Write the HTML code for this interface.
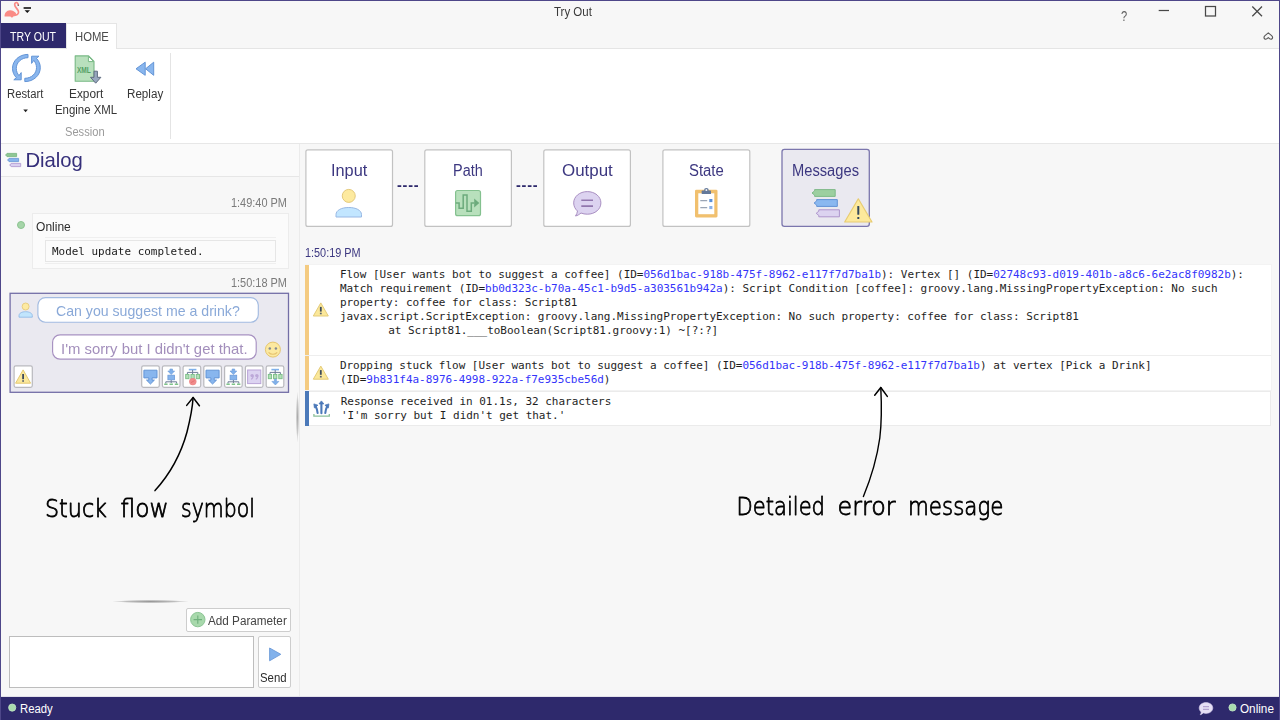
<!DOCTYPE html>
<html lang="en">
<head>
<meta charset="utf-8">
<title>Try Out</title>
<style>
*{box-sizing:border-box;margin:0;padding:0}
html,body{width:1280px;height:720px;overflow:hidden;background:#f7f7f7}
body{position:relative;font-family:"Liberation Sans",sans-serif;font-size:12px;color:#222}
.abs{position:absolute}
.t{position:absolute;white-space:pre;line-height:1;transform-origin:0 0}
svg{position:absolute;overflow:visible}
#frame{left:0;top:0;width:1280px;height:720px;border:1px solid #4e4789;border-bottom:none;pointer-events:none}
#tab-try{left:1px;top:23px;width:65px;height:25px;background:#2e296c}
#tab-home{left:66px;top:23px;width:51px;height:26px;background:#fff;border:1px solid #e5e5e5;border-bottom:none}
#ribbon{left:1px;top:48px;width:1278px;height:96px;background:#fff;border-top:1px solid #e5e5e5;border-bottom:1px solid #e7e7e7}
#ribsep{left:170px;top:53px;width:1px;height:86px;background:#e4e4e4}
#lhead{left:1px;top:144px;width:298px;height:33px;background:#fafafa;border-bottom:1px solid #e6e6e6}
#lsplit{left:299px;top:144px;width:1px;height:553px;background:#ebebeb}
#status{left:0;top:697px;width:1280px;height:23px;background:#2e296c}
.box{position:absolute;background:#fff;border:1px solid #c9c9c9;border-radius:2px}
.pb{position:absolute;top:149px;width:88px;height:78px;background:#fff;border:1px solid #c6c6c6;border-radius:2px;box-shadow:0 1px 0 rgba(0,0,0,.05)}
.msg{position:absolute;left:305px;width:967px;background:#fff;border:1px solid #f0f0f0}
.bar{position:absolute;left:305px;width:4px}
.ml{position:absolute;left:339.9px;white-space:pre;line-height:14px;font-family:"DejaVu Sans Mono","Liberation Mono",monospace;font-size:11px;letter-spacing:-0.024px;color:#1e1e1e}
.ml b{font-weight:normal;color:#3434fa}
</style>
</head>
<body>

<!-- chrome -->
<div id="ribbon" class="abs"></div>
<div id="tab-try" class="abs"></div>
<div id="tab-home" class="abs"></div>
<svg width="1280" height="50" viewBox="0 0 1280 50" style="left:0;top:0">
<!-- flamingo -->
<g>
<path d="M4.6 16.4 C4.3 13.2 6.6 10.3 10 10.2 C12.6 10.1 14 11.4 15.4 12.6 C16.6 13.6 16.4 15.6 13.8 16 L12.9 17.3 L11.4 17.6 L10.4 16.5 Z" fill="#fa8b86"/>
<path d="M13.2 15.2 C16.8 15.8 19.3 13.8 18.4 11.2 C17.6 8.8 14.8 7.2 14.7 4.7 C14.6 3 16 2.1 17 2.7 C17.7 3.1 18.1 3.9 18.3 4.7" fill="none" stroke="#fa8b86" stroke-width="1.7" stroke-linecap="round"/>
<circle cx="18.3" cy="5.3" r="0.8" fill="#6b5f66"/>
</g>
<!-- quick access dropdown -->
<rect x="23.6" y="7.2" width="7.4" height="1.6" fill="#111"/>
<path d="M24.6 10.2 L30 10.2 L27.3 13.1 Z" fill="#111"/>
<!-- window controls -->
<g fill="none" stroke="#484848" stroke-width="1.25">
<path d="M1158.7 10.5 H1169"/>
<rect x="1205.5" y="6.5" width="10" height="9.5"/>
<path d="M1252.3 6.5 L1262 16.2 M1262 6.5 L1252.3 16.2"/>
</g>
<path d="M1264.6 38.8 C1263.6 37.6 1264 36.5 1265 35.6 L1268.3 32.8 L1271.6 35.6 C1272.6 36.5 1273 37.6 1272 38.8 C1271 39.6 1269.6 39 1268.3 37.6 C1267 39 1265.6 39.6 1264.6 38.8 Z" fill="none" stroke="#5a5a5a" stroke-width="1.1" stroke-linejoin="round"/>
</svg>

<!-- ribbon -->
<div id="ribsep" class="abs"></div>
<svg width="200" height="100" viewBox="0 48 200 100" style="left:0;top:48px">
<!-- restart -->
<g fill="#89b6ee" stroke="#6394d6" stroke-width="1" stroke-linejoin="round">
<path id="rsarc" d="M28 54.4 L28 57.7 C21.3 57.7 16.3 62.4 16.3 68.4 C16.3 71.3 17.4 73.7 19 75.6 L21.2 72.6 L21.2 79.8 L13.8 79.8 L16.4 77.7 C14 75.4 12.5 72.1 12.5 68.3 C12.5 60.6 19.2 54.4 28 54.4 Z"/>
<path d="M28 54.4 L28 57.7 C21.3 57.7 16.3 62.4 16.3 68.4 C16.3 71.3 17.4 73.7 19 75.6 L21.2 72.6 L21.2 79.8 L13.8 79.8 L16.4 77.7 C14 75.4 12.5 72.1 12.5 68.3 C12.5 60.6 19.2 54.4 28 54.4 Z" transform="rotate(180 26.4 68)"/>
</g>
<!-- export xml -->
<path d="M75.2 55.9 L88.6 55.9 L94 61.4 L94 81.2 L75.2 81.2 Z" fill="#b9e0bd" stroke="#78b985" stroke-width="1.1" stroke-linejoin="round"/>
<path d="M88.4 56.4 L88.4 61.6 L93.6 61.6 Z" fill="#fff" stroke="#78b985" stroke-width="1" stroke-linejoin="round"/>
<text x="76.9" y="72.6" font-family="'Liberation Sans',sans-serif" font-weight="bold" font-size="8.6" fill="#55a065" textLength="13.9" lengthAdjust="spacingAndGlyphs">XML</text>
<path d="M94 71.2 L97.4 71.2 L97.4 77.3 L100.9 77.3 L95.7 83.2 L90.5 77.3 L94 77.3 Z" fill="#98a8bf" stroke="#5f6c80" stroke-width="1" stroke-linejoin="round"/>
<!-- replay -->
<g fill="#89b6ee" stroke="#6394d6" stroke-width="1" stroke-linejoin="round">
<path d="M136 68.8 L145.2 62.2 L145.2 75.3 Z"/>
<path d="M145.6 68.8 L153.7 62.2 L153.7 75.3 Z"/>
</g>
<!-- restart dropdown arrow -->
<path d="M23.3 109.6 L27.9 109.6 L25.6 112.2 Z" fill="#222"/>
</svg>

<!-- left -->
<div id="lhead" class="abs"></div>
<div id="lsplit" class="abs"></div>
<!-- online notice -->
<div class="abs" style="left:32px;top:213px;width:257px;height:56px;background:#fbfbfb;border:1px solid #ececec"></div>
<div class="abs" style="left:45px;top:237px;width:231px;height:1px;background:#efefef"></div>
<div class="abs" style="left:45px;top:263px;width:231px;height:1px;background:#efefef"></div>
<div class="abs" style="left:45px;top:240px;width:231px;height:22px;background:#fbfbfb;border:1px solid #e6e6e6"></div>
<!-- splitter grips -->
<div class="abs" style="left:113px;top:600px;width:75px;height:3px;background:radial-gradient(ellipse at center,rgba(120,120,120,.75) 0%,rgba(120,120,120,.45) 45%,rgba(120,120,120,0) 72%)"></div>
<div class="abs" style="left:296px;top:392px;width:3px;height:50px;background:radial-gradient(ellipse at center,rgba(120,120,120,.6) 0%,rgba(120,120,120,.35) 45%,rgba(120,120,120,0) 72%)"></div>
<!-- input -->
<div class="box" style="left:186px;top:608px;width:105px;height:24px;border-color:#cdcdcd"></div>
<div class="abs" style="left:9px;top:636px;width:245px;height:52px;background:#fff;border:1px solid #bdbdbd"></div>
<div class="box" style="left:258px;top:636px;width:33px;height:52px;border-color:#cdcdcd"></div>
<svg width="300" height="560" viewBox="0 143 300 560" style="left:0;top:143px">
<!-- dialog header icon -->
<g stroke-width="0.9" stroke-linejoin="round">
<path d="M5.5 155 L7 153.9 L7 153.4 L16.6 153.4 L16.6 156.6 L7 156.6 L7 156.1 Z" fill="#8fc794" stroke="#7cb885"/>
<path d="M7.5 160 L9 158.9 L9 158.4 L18.6 158.4 L18.6 161.6 L9 161.6 L9 161.1 Z" fill="#86b4ec" stroke="#6c9ad8"/>
<path d="M9.6 165 L11.1 163.9 L11.1 163.4 L20.7 163.4 L20.7 166.6 L11.1 166.6 L11.1 166.1 Z" fill="#d9cff0" stroke="#b39cd2"/>
</g>
<!-- online dot -->
<circle cx="21" cy="225" r="3.5" fill="#a6d5a9" stroke="#8cc491" stroke-width="1"/>
<!-- dialog turn box -->
<rect x="10.1" y="293.3" width="278.4" height="99" fill="#eae9f0" stroke="#736ea6" stroke-width="1.3"/>
<rect x="37.9" y="297.6" width="220.4" height="24.6" rx="7.5" fill="#fff" stroke="#a3bbe1" stroke-width="1.15"/>
<rect x="52.6" y="334.8" width="203.6" height="24.4" rx="7.5" fill="#fff" stroke="#a791c1" stroke-width="1.15"/>
<!-- user icon -->
<circle cx="25.6" cy="306.5" r="3.5" fill="#fdeaa2" stroke="#e6cb7c" stroke-width="0.9"/>
<path d="M19 317.2 L19 315.6 C19 313.2 21.8 311.7 25.6 311.7 C29.4 311.7 32.3 313.2 32.3 315.6 L32.3 317.2 Z" fill="#c1e5fd" stroke="#93bbe6" stroke-width="0.9" stroke-linejoin="round"/>
<!-- smiley -->
<circle cx="272.9" cy="349.6" r="7.5" fill="#fce9a0" stroke="#e5c570" stroke-width="1"/>
<circle cx="269.8" cy="348.5" r="1.25" fill="#848a92"/>
<circle cx="275.9" cy="348.5" r="1.25" fill="#848a92"/>
<path d="M268.9 352.6 C270.6 354.8 275.2 354.8 276.9 352.6" fill="none" stroke="#e6c36f" stroke-width="1.2" stroke-linecap="round"/>
<!-- small buttons -->
<g fill="#fff" stroke="#b9b9be" stroke-width="1.2">
<rect x="14.1" y="365.8" width="18.2" height="21.5" rx="1.8"/>
<rect x="141.7" y="365.8" width="17.6" height="21.5" rx="1.8"/>
<rect x="162.4" y="365.8" width="17.6" height="21.5" rx="1.8"/>
<rect x="183.1" y="365.8" width="17.6" height="21.5" rx="1.8"/>
<rect x="203.8" y="365.8" width="17.6" height="21.5" rx="1.8"/>
<rect x="224.6" y="365.8" width="17.6" height="21.5" rx="1.8"/>
<rect x="245.4" y="365.8" width="17.6" height="21.5" rx="1.8"/>
<rect x="266.2" y="365.8" width="17.6" height="21.5" rx="1.8"/>
</g>
<!-- warning (stuck flow) -->
<path d="M23.1 369.9 L30.6 383.2 L15.6 383.2 Z" fill="#fbe89c" stroke="#e4c972" stroke-width="1" stroke-linejoin="round"/>
<rect x="22.2" y="374" width="1.8" height="5.2" fill="#3c4a5c"/>
<rect x="22.2" y="380.2" width="1.8" height="1.6" fill="#5a6470"/>
<!-- flow icons -->
<defs>
<g id="i-in"><path d="M0.5 0.6 L13.6 0.6 L13.6 8.3 L8.7 8.3 L8.7 10.5 L11 10.5 L7.05 14.4 L3.1 10.5 L5.4 10.5 L5.4 8.3 L0.5 8.3 Z" fill="#88b6ee" stroke="#6394d6" stroke-width="1" stroke-linejoin="round"/></g>
<g id="i-tree"><path d="M5.7 0 L8.3 0 L8.3 2 L10.4 2 L7 5.6 L3.6 2 L5.7 2 Z" fill="#7fb0ea" stroke="#6c9ad8" stroke-width="0.6"/><rect x="3.7" y="6.2" width="6.6" height="4.6" fill="#86b4ec" stroke="#6c9ad8" stroke-width="0.8"/><path d="M7 11 V14 M1.6 14.6 V12.8 H12.4 V14.6" fill="none" stroke="#6f7e98" stroke-width="1"/><path d="M0 15.2 H3.4 M5.3 15.2 H8.7 M10.6 15.2 H14" fill="none" stroke="#7fc48a" stroke-width="1.5"/></g>
<g id="i-fan"><path d="M3.2 0.6 H10.8" stroke="#7fb0ea" stroke-width="1.6" fill="none"/><path d="M7 1 V5 M1.8 5.4 V3.4 H12.2 V5.4" fill="none" stroke="#6f7e98" stroke-width="1"/><g fill="#b4dfb8" stroke="#79bd85" stroke-width="0.9"><rect x="0.1" y="5.4" width="3.3" height="4.3"/><rect x="5.35" y="5.4" width="3.3" height="4.3"/><rect x="10.6" y="5.4" width="3.3" height="4.3"/></g></g>
</defs>
<use href="#i-in" x="143.4" y="369.6"/>
<use href="#i-tree" x="164.2" y="369"/>
<use href="#i-fan" x="185.6" y="369"/>
<circle cx="192.8" cy="381.6" r="3.7" fill="#f08b8b"/>
<path d="M191 382.6 L194.6 380.6" stroke="#e06c6c" stroke-width="0.8"/>
<use href="#i-in" x="205.5" y="369.6"/>
<use href="#i-tree" x="226.4" y="369"/>
<rect x="247.6" y="370" width="13.2" height="13.6" fill="#dcd3f1" stroke="#baa4d8" stroke-width="1"/>
<g fill="#bca8d8"><circle cx="252.1" cy="375.6" r="1.7"/><circle cx="256.8" cy="375.6" r="1.7"/><path d="M253.8 375.6 C253.8 378 252.8 379.3 251.2 379.7 L250.9 378.8 C251.8 378.4 252.3 377.6 252.3 376.6 Z"/><path d="M258.5 375.6 C258.5 378 257.5 379.3 255.9 379.7 L255.6 378.8 C256.5 378.4 257 377.6 257 376.6 Z"/></g>
<use href="#i-fan" x="268.2" y="369"/>
<path d="M274.4 379.2 L276.4 379.2 L276.4 381.4 L278.9 381.4 L275.4 385 L271.9 381.4 L274.4 381.4 Z" fill="#7fb0ea" stroke="#6c9ad8" stroke-width="0.6" stroke-linejoin="round"/>
<!-- add parameter icon -->
<circle cx="197.8" cy="619.6" r="7.2" fill="#a8d9ac" stroke="#8cc595" stroke-width="1"/>
<path d="M193.6 619.6 H202 M197.8 615.4 V623.8" stroke="#6fb07c" stroke-width="1.1" fill="none"/>
<!-- send icon -->
<path d="M269.6 648 L280.8 654.3 L269.6 660.8 Z" fill="#82b2ec" stroke="#6c9ad8" stroke-width="0.9" stroke-linejoin="round"/>
</svg>

<!-- right -->
<!-- messages -->
<div class="abs" style="left:305px;top:264px;width:967px;height:127px;background:#f3f3f3"></div>
<div class="abs" style="left:305px;top:265px;width:966px;height:90px;background:#fff"></div>
<div class="abs" style="left:305px;top:355px;width:966px;height:1px;background:#eeeeee"></div>
<div class="abs" style="left:305px;top:356px;width:966px;height:34px;background:#fff"></div>
<div class="abs" style="left:305px;top:391px;width:966px;height:35px;background:#fff;border:1px solid #ebebeb"></div>
<div class="bar" style="top:265px;height:90px;background:#f4cb81"></div>
<div class="bar" style="top:356px;height:34px;background:#f4cb81"></div>
<div class="bar" style="top:391px;height:35px;background:#4b79b9"></div>
<div class="ml" style="top:267.5px">Flow [User wants bot to suggest a coffee] (ID=<b>056d1bac-918b-475f-8962-e117f7d7ba1b</b>): Vertex [] (ID=<b>02748c93-d019-401b-a8c6-6e2ac8f0982b</b>):</div>
<div class="ml" style="top:281.5px">Match requirement (ID=<b>bb0d323c-b70a-45c1-b9d5-a303561b942a</b>): Script Condition [coffee]: groovy.lang.MissingPropertyException: No such</div>
<div class="ml" style="top:295.5px">property: coffee for class: Script81</div>
<div class="ml" style="top:309.5px">javax.script.ScriptException: groovy.lang.MissingPropertyException: No such property: coffee for class: Script81</div>
<div class="ml" style="top:323.5px;left:388.2px">at Script81.___toBoolean(Script81.groovy:1) ~[?:?]</div>
<div class="ml" style="top:359px">Dropping stuck flow [User wants bot to suggest a coffee] (ID=<b>056d1bac-918b-475f-8962-e117f7d7ba1b</b>) at vertex [Pick a Drink]</div>
<div class="ml" style="top:372.5px">(ID=<b>9b831f4a-8976-4998-922a-f7e935cbe56d</b>)</div>
<div class="ml" style="top:395.3px;left:340.7px">Response received in 01.1s, 32 characters</div>
<div class="ml" style="top:408.8px;left:340.9px">'I'm sorry but I didn't get that.'</div>
<svg width="980" height="300" viewBox="300 143 980 300" style="left:300px;top:143px">
<g fill="#fff" stroke="#c2c2c2" stroke-width="1.2"><rect x="305.9" y="149.8" width="86.6" height="76.6" rx="2"/><rect x="424.8" y="149.8" width="86.6" height="76.6" rx="2"/><rect x="543.8" y="149.8" width="86.6" height="76.6" rx="2"/><rect x="662.9" y="149.8" width="86.9" height="76.6" rx="2"/></g>
<!-- messages button (selected) -->
<rect x="782.0" y="149.4" width="87.3" height="77" rx="2.4" fill="#eae9f0" stroke="#7b76ad" stroke-width="1.3"/>
<!-- input icon -->
<circle cx="348.75" cy="195.9" r="6.5" fill="#fdea9f" stroke="#e4c97a" stroke-width="1"/>
<path d="M336 217 L336 214.6 C336 210.2 341.6 207.5 348.75 207.5 C355.9 207.5 361.5 210.2 361.5 214.6 L361.5 217 Z" fill="#c2e6ff" stroke="#98b8e4" stroke-width="1" stroke-linejoin="round"/>
<!-- path icon -->
<rect x="455.6" y="190.5" width="24.9" height="25.2" rx="2" fill="#b8e0bc" stroke="#84c18f" stroke-width="1.2"/>
<path d="M455.8 203.1 H459.1 V208.2 H463.2 V195 H467 V211.2 H471.3 V203.1 H474.4" fill="none" stroke="#6cab7c" stroke-width="1.5"/>
<path d="M474.2 198.6 L479.3 203.1 L474.2 207.4 Z" fill="#6cab7c"/>
<!-- output icon -->
<path d="M587.3 191.6 C595 191.6 600.9 196.6 600.9 202.9 C600.9 209.2 595 214.2 587.3 214.2 C585 214.2 582.9 213.8 581 213 C579.4 214.4 577.6 215.5 575.5 216 C576.6 214.4 577.3 212.8 577.5 211 C575.1 209 573.7 206.1 573.7 202.9 C573.7 196.6 579.6 191.6 587.3 191.6 Z" fill="#dcd3f0" stroke="#a98fc2" stroke-width="1" stroke-linejoin="round"/>
<path d="M581.3 200.2 H593 M581.3 206.1 H593" stroke="#9177ad" stroke-width="1.6" fill="none"/>
<!-- state icon -->
<rect x="695" y="189.8" width="22.5" height="27.6" rx="1.3" fill="#f1c06e"/>
<rect x="698.3" y="193.3" width="16" height="20.9" fill="#fff"/>
<circle cx="706.4" cy="190.3" r="1.7" fill="#fff" stroke="#64799a" stroke-width="1.3"/>
<rect x="701.7" y="190.6" width="9.3" height="3.4" rx="0.6" fill="#64799a"/>
<circle cx="706.4" cy="190.2" r="0.7" fill="#f4f4f8"/>
<path d="M700.3 200.6 H707.2 M700.3 207.6 H707.2" stroke="#9aa5b5" stroke-width="1.3" fill="none"/>
<rect x="709.3" y="199" width="3.1" height="3.1" fill="#5a8fd6"/>
<rect x="709.3" y="206" width="3.1" height="3.1" fill="#8ab0e6"/>
<!-- messages icon -->
<g stroke-width="1" stroke-linejoin="round">
<path d="M812 193 L814.6 190.9 L814.6 189.6 L835.2 189.6 L835.2 196.4 L814.6 196.4 L814.6 195.1 Z" fill="#9ccfa0" stroke="#7fb989"/>
<path d="M814.1 203 L816.7 200.9 L816.7 199.6 L837.3 199.6 L837.3 206.4 L816.7 206.4 L816.7 205.1 Z" fill="#8ab8f0" stroke="#6292d4"/>
<path d="M816.2 213.3 L818.8 211.2 L818.8 209.8 L839.4 209.8 L839.4 216.8 L818.8 216.8 L818.8 215.4 Z" fill="#dcd3f0" stroke="#ae95cc"/>
</g>
<path d="M858.3 198.8 L872 222 L844.7 222 Z" fill="#fde99c" stroke="#e8cc72" stroke-width="1.2" stroke-linejoin="round"/>
<rect x="857.3" y="206" width="2" height="8.8" rx="0.6" fill="#34495e"/>
<rect x="857.3" y="217" width="2" height="2" rx="0.5" fill="#34495e"/>
<!-- message icons -->
<g id="warnS">
<path d="M320.8 302.9 L328.3 316 L313.3 316 Z" fill="#fbe89a" stroke="#e4cb78" stroke-width="1" stroke-linejoin="round"/>
<rect x="319.9" y="306.9" width="1.8" height="4.7" fill="#3c4a5c"/>
<rect x="319.9" y="312.7" width="1.8" height="1.6" fill="#5a6470"/>
</g>
<use href="#warnS" y="63.2"/>
<g stroke="#4b79b9" stroke-width="2.1" fill="none" stroke-linecap="round">
<path d="M321.4 413.2 V403"/>
<path d="M317.6 413 C317.3 410.4 316.6 408 315.5 406"/>
<path d="M325.3 413 C325.6 410.4 326.3 408 327.4 406"/>
</g>
<g fill="#4b79b9" stroke="#4b79b9" stroke-width="0.8" stroke-linejoin="round">
<path d="M321.4 400.9 L323.8 403.9 L319 403.9 Z"/>
<path d="M313.9 403.9 L317.9 405.2 L314.4 407.9 Z"/>
<path d="M328.9 403.9 L324.9 405.2 L328.4 407.9 Z"/>
</g>
<path d="M313.9 414 V416.1 H329.3 V414" fill="none" stroke="#8cc09a" stroke-width="1.3"/>
</svg>

<!-- annot -->
<svg width="1280" height="720" viewBox="0 0 1280 720" style="left:0;top:0;pointer-events:none;will-change:transform">
<g fill="none" stroke="#000" stroke-linecap="round" stroke-linejoin="round">
<path d="M155 490.6 C170 474 181 454 187 432 C190 420 192.5 408 193.1 397.5" stroke-width="1.5"/>
<path d="M186.7 405.4 L193.1 397.5 L199.4 405.8" stroke-width="1.5"/>
<path d="M863.4 496.5 C871 478 877 458 879.8 438 C882 420 881.5 402 880.8 387.5" stroke-width="1.4"/>
<path d="M874.7 395.2 L880.8 387.5 L887.3 396.4" stroke-width="1.5"/>
</g>
<g font-family="'DejaVu Sans','Liberation Sans',sans-serif" font-weight="200" font-size="25" fill="#000" stroke="#000" stroke-width="0.85" stroke-linejoin="round" stroke-linecap="round">
<text y="517"><tspan x="45" textLength="62" lengthAdjust="spacingAndGlyphs">Stuck</tspan> <tspan x="120.5" textLength="48" lengthAdjust="spacingAndGlyphs">flow</tspan> <tspan x="181" textLength="74" lengthAdjust="spacingAndGlyphs">symbol</tspan></text>
<text y="515"><tspan x="736.5" textLength="88.5" lengthAdjust="spacingAndGlyphs">Detailed</tspan> <tspan x="837.5" textLength="58" lengthAdjust="spacingAndGlyphs">error</tspan> <tspan x="908" textLength="95.5" lengthAdjust="spacingAndGlyphs">message</tspan></text>
</g>
</svg>

<!-- status -->
<div class="abs" style="left:1px;top:696px;width:1278px;height:1px;background:#e2e1ea"></div>
<div id="status" class="abs"></div>
<svg width="1280" height="23" viewBox="0 697 1280 23" style="left:0;top:697px">
<circle cx="12.2" cy="707.6" r="3.6" fill="#a9dcae" stroke="#c4e6c7" stroke-width="0.8"/>
<circle cx="1232.5" cy="707.5" r="3.6" fill="#a9dcae" stroke="#c4e6c7" stroke-width="0.8"/>
<path d="M1206 702.6 C1209.9 702.6 1212.8 705 1212.8 708 C1212.8 711 1209.9 713.4 1206 713.4 C1205 713.4 1204.1 713.2 1203.2 712.9 C1202.4 713.8 1201.4 714.5 1200.2 714.8 C1200.8 713.9 1201.1 713 1201.2 712 C1200 711 1199.2 709.6 1199.2 708 C1199.2 705 1202.1 702.6 1206 702.6 Z" fill="#e6e0f5" stroke="#d2c8ea" stroke-width="0.6"/>
<path d="M1203 706.6 H1209 M1203 709.4 H1209" stroke="#b3a2d0" stroke-width="1.1" fill="none"/>
</svg>

<!-- text -->
<div class="t" style="left:554.00px;top:5.84px;font-size:12px;color:#3a3a3a;transform:scaleX(0.9580);">Try Out</div>
<div class="t" style="left:1121.30px;top:8.75px;font-size:14px;color:#606060;transform:scaleX(0.7952);">?</div>
<div class="t" style="left:9.50px;top:30.84px;font-size:12px;color:#ffffff;transform:scaleX(0.8806);">TRY OUT</div>
<div class="t" style="left:74.50px;top:30.84px;font-size:12px;color:#4a4a4a;transform:scaleX(0.9417);">HOME</div>
<div class="t" style="left:7.30px;top:87.84px;font-size:12px;color:#363636;transform:scaleX(0.9383);">Restart</div>
<div class="t" style="left:69.00px;top:87.54px;font-size:12px;color:#363636;transform:scaleX(0.9859);">Export</div>
<div class="t" style="left:54.50px;top:103.64px;font-size:12px;color:#363636;transform:scaleX(0.9499);">Engine XML</div>
<div class="t" style="left:127.00px;top:87.54px;font-size:12px;color:#363636;transform:scaleX(0.9690);">Replay</div>
<div class="t" style="left:64.50px;top:125.64px;font-size:12px;color:#9a9a9a;transform:scaleX(0.9273);">Session</div>
<div class="t" style="left:25.40px;top:150.02px;font-size:20.3px;color:#352f7a;">Dialog</div>
<div class="t" style="left:231.00px;top:196.94px;font-size:12px;color:#7a7a7a;transform:scaleX(0.9108);">1:49:40 PM</div>
<div class="t" style="left:36.10px;top:221.04px;font-size:12px;color:#2c2c2c;">Online</div>
<div class="t" style="left:52.00px;top:245.69px;font-size:11px;font-family:'DejaVu Sans Mono','Liberation Mono',monospace;color:#1a1a1a;transform:scaleX(0.9946);">Model update completed.</div>
<div class="t" style="left:231.00px;top:276.64px;font-size:12px;color:#7a7a7a;transform:scaleX(0.9108);">1:50:18 PM</div>
<div class="t" style="left:55.80px;top:303.30px;font-size:15px;color:#8aa9d8;transform:scaleX(0.9420);">Can you suggest me a drink?</div>
<div class="t" style="left:61.10px;top:341.30px;font-size:15px;color:#a38fbc;transform:scaleX(0.9908);">I'm sorry but I didn't get that.</div>
<div class="t" style="left:208.10px;top:614.54px;font-size:12px;color:#444;transform:scaleX(0.9762);">Add Parameter</div>
<div class="t" style="left:260.30px;top:672.44px;font-size:12px;color:#2c2c2c;transform:scaleX(0.9489);">Send</div>
<div class="t" style="left:330.50px;top:162.79px;font-size:15.6px;color:#3c3780;transform:scaleX(1.0465);">Input</div>
<div class="t" style="left:453.00px;top:162.79px;font-size:15.6px;color:#3c3780;transform:scaleX(0.9254);">Path</div>
<div class="t" style="left:562.00px;top:162.79px;font-size:15.6px;color:#3c3780;transform:scaleX(1.0852);">Output</div>
<div class="t" style="left:688.80px;top:162.79px;font-size:15.6px;color:#3c3780;transform:scaleX(0.9555);">State</div>
<div class="t" style="left:791.90px;top:162.79px;font-size:15.6px;color:#3c3780;transform:scaleX(0.9426);">Messages</div>
<div class="t" style="left:397.00px;top:178.33px;font-size:14.5px;color:#2e296c;font-weight:bold;letter-spacing:0.75px;">----</div>
<div class="t" style="left:516.00px;top:178.33px;font-size:14.5px;color:#2e296c;font-weight:bold;letter-spacing:0.75px;">----</div>
<div class="t" style="left:305.30px;top:247.44px;font-size:12px;color:#3c3780;transform:scaleX(0.9059);">1:50:19 PM</div>
<div class="t" style="left:19.90px;top:703.04px;font-size:12px;color:#ffffff;transform:scaleX(0.9427);">Ready</div>
<div class="t" style="left:1240.00px;top:702.84px;font-size:12px;color:#ffffff;transform:scaleX(0.9773);">Online</div>
<div id="frame" class="abs"></div>
</body>
</html>
